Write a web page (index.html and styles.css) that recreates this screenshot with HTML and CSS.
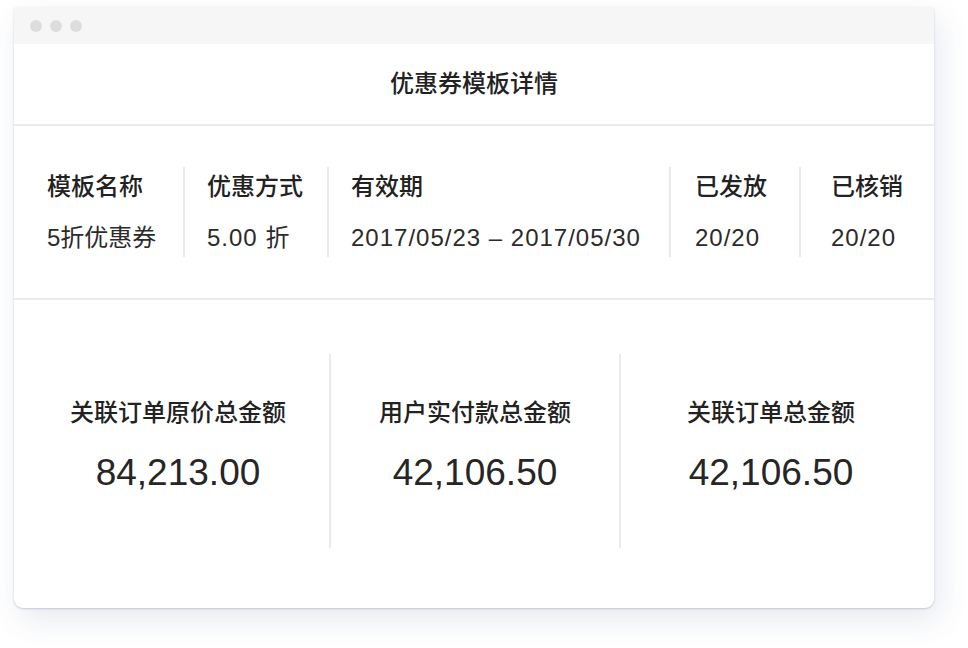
FILE: index.html
```html
<!DOCTYPE html>
<html lang="zh-CN">
<head>
    <meta charset="UTF-8">
    <title>优惠券模板详情</title>
    <link rel="stylesheet" href="styles.css">
</head>
<body>
    <div class="window">
        <div class="titlebar">
            <span class="dot"></span>
            <span class="dot"></span>
            <span class="dot"></span>
        </div>

        <div class="page-title">优惠券模板详情</div>

        <div class="info-row">
            <div class="info-item name">
                <div class="info-label">模板名称</div>
                <div class="info-value">5折优惠券</div>
            </div>
            <div class="info-item mode">
                <div class="info-label">优惠方式</div>
                <div class="info-value num">5.00 折</div>
            </div>
            <div class="info-item period">
                <div class="info-label">有效期</div>
                <div class="info-value num">2017/05/23 – 2017/05/30</div>
            </div>
            <div class="info-item issued">
                <div class="info-label">已发放</div>
                <div class="info-value num">20/20</div>
            </div>
            <div class="info-item used">
                <div class="info-label">已核销</div>
                <div class="info-value num">20/20</div>
            </div>
        </div>

        <div class="stats">
            <div class="stat">
                <div class="stat-label">关联订单原价总金额</div>
                <div class="stat-value">84,213.00</div>
            </div>
            <div class="stat">
                <div class="stat-label">用户实付款总金额</div>
                <div class="stat-value">42,106.50</div>
            </div>
            <div class="stat">
                <div class="stat-label">关联订单总金额</div>
                <div class="stat-value">42,106.50</div>
            </div>
        </div>
    </div>
</body>
</html>
```

FILE: styles.css
```css
body {
    margin: 0;
    padding-bottom: 40px;
    background-color: #ffffff;
    font-family: "Liberation Sans", "Noto Sans CJK SC", sans-serif;
    color: #262626;
}

.window {
    width: 920px;
    height: 601px;
    margin: 7px 0 0 14px;
    background-color: #ffffff;
    border-radius: 3px 3px 9px 9px;
    box-shadow: 0 1px 2px rgba(60, 70, 120, 0.24), 6px 12px 30px rgba(60, 80, 140, 0.12);
    overflow: hidden;
}

.titlebar {
    height: 37px;
    background-color: #f6f6f6;
    display: flex;
    align-items: center;
    gap: 8px;
    padding-left: 16px;
    box-sizing: border-box;
}

.dot {
    width: 12px;
    height: 12px;
    border-radius: 50%;
    background-color: #dddddd;
}

.page-title {
    height: 80px;
    line-height: 80px;
    text-align: center;
    font-size: 24px;
    font-weight: 500;
    color: #222222;
    border-bottom: 2px solid #ebebeb;
}

/* coupon info: five columns */
.info-row {
    display: flex;
    padding: 41px 0 41px 33px;
    border-bottom: 2px solid #ebebeb;
}

.info-item {
    height: 90px;
    box-sizing: border-box;
    padding-left: 22px;
    border-left: 2px solid #ebebeb;
}

.info-item.name {
    width: 136px;
    padding-left: 0;
    border-left: none;
}

.info-item.mode {
    width: 144px;
}

.info-item.period {
    width: 342px;
}

.info-item.issued {
    width: 130px;
    padding-left: 24px;
}

.info-item.used {
    flex: 1;
    padding-left: 30px;
}

.info-label {
    font-size: 24px;
    line-height: 40px;
    font-weight: 500;
    color: #222222;
}

.info-value {
    font-size: 24px;
    line-height: 38px;
    margin-top: 12px;
    color: #2b2b2b;
    white-space: nowrap;
}

.info-value.num {
    letter-spacing: 1px;
}

/* order totals */
.stats {
    display: grid;
    grid-template-columns: 302px 290px 302px;
    padding: 54px 13px 62px;
}

.stat {
    height: 194px;
    text-align: center;
    border-left: 2px solid #ebebeb;
}

.stat:first-child {
    border-left: none;
}

.stat-label {
    padding-top: 42px;
    font-size: 24px;
    line-height: 34px;
    font-weight: 500;
    color: #222222;
}

.stat-value {
    margin-top: 18px;
    font-size: 37px;
    line-height: 50px;
    color: #262626;
}
```
